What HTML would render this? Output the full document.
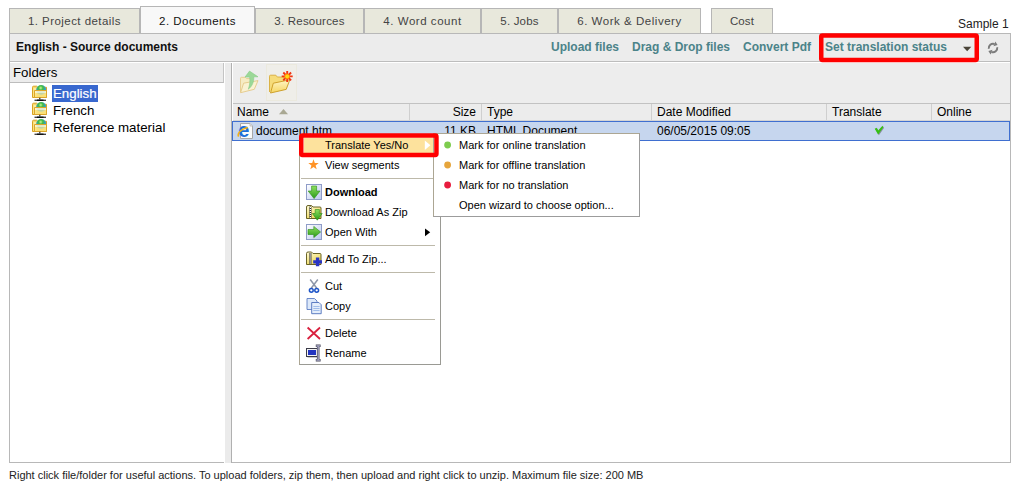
<!DOCTYPE html>
<html><head><meta charset="utf-8">
<style>
*{box-sizing:border-box}
html,body{margin:0;padding:0;width:1020px;height:498px;overflow:hidden;background:#fff;font-family:"Liberation Sans",sans-serif;color:#000}
div{position:absolute}
.tab{top:8px;height:26px;background:#e8e8dc;border:1px solid #b6b6b6;border-bottom:none;font-size:11.5px;color:#444;text-align:center;line-height:24px;white-space:nowrap}
.tab.act{top:6px;height:28px;background:#f8f8f8;color:#111;line-height:28px}
.t{white-space:nowrap}
.f11{font-size:11px;line-height:13px}
.f12{font-size:12px;line-height:14px}
.f13{font-size:13px;line-height:15px}
.lnk{top:41px;font-size:12px;line-height:14px;font-weight:bold;color:#4b8389;white-space:nowrap}
.sep{height:1px;background:#bdb9aa}
.vs{width:1px;top:104px;height:16px;background:#cfcfcf}
.mi{left:325px;font-size:11px;line-height:13px;white-space:nowrap;color:#000}
</style></head><body>

<!-- tabs -->
<div class="tab" style="left:9px;width:131px;letter-spacing:0.45px">1. Project details</div>
<div class="tab act" style="left:140px;width:115px;letter-spacing:0.5px">2. Documents</div>
<div class="tab" style="left:255px;width:109px;letter-spacing:0.22px">3. Resources</div>
<div class="tab" style="left:364px;width:117px;letter-spacing:0.54px">4. Word count</div>
<div class="tab" style="left:481px;width:77px;letter-spacing:0.18px">5. Jobs</div>
<div class="tab" style="left:558px;width:143px;letter-spacing:0.53px">6. Work &amp; Delivery</div>
<div class="tab" style="left:711px;width:62px;letter-spacing:0.13px">Cost</div>
<div class="t f12" style="left:958px;top:17px;color:#222">Sample 1</div>

<!-- outer box -->
<div style="left:9px;top:33px;width:1002px;height:430px;border:1px solid #b8b8b8;background:#fff"></div>
<!-- header bar -->
<div style="left:10px;top:34px;width:1000px;height:28px;background:#ececec;border-bottom:1px solid #bdbdbd"></div>
<div class="t f12" style="left:16px;top:40px;font-weight:bold;color:#111">English - Source documents</div>
<div class="lnk" style="left:551px;top:40px">Upload files</div>
<div class="lnk" style="left:632px;top:40px">Drag &amp; Drop files</div>
<div class="lnk" style="left:743px;top:40px">Convert Pdf</div>
<div class="lnk" style="left:825px;top:40px">Set translation status</div>

<!-- folders panel header -->
<div style="left:10px;top:63px;width:214px;height:20px;background:#ececec;border-bottom:1px solid #bdbdbd;border-right:1px solid #c4c4c4"></div>
<div class="t f13" style="left:13px;top:65px;font-size:13.3px">Folders</div>
<!-- tree -->
<div style="left:52px;top:85px;width:46px;height:17px;background:#3868cf"></div>
<div class="t f13" style="left:53px;top:86px;color:#fff;font-size:13.3px;-webkit-text-stroke:0.2px #fff">English</div>
<div class="t f13" style="left:53px;top:103px;font-size:13.3px">French</div>
<div class="t f13" style="left:53px;top:120px;font-size:13.3px">Reference material</div>

<!-- splitter -->
<div style="left:225px;top:63px;width:6px;height:400px;background:#ebebeb"></div>
<div style="left:231px;top:63px;width:1px;height:400px;background:#b0b0b0"></div>
<div style="left:224px;top:462px;width:1px;height:1px;background:#fff"></div>

<!-- toolbar -->
<div style="left:233px;top:63px;width:777px;height:41px;background:#ededed;border-bottom:1px solid #c2c2c2"></div>
<div style="left:266px;top:64px;width:31px;height:37px;border:1px solid #ebe9de;background:#efeee9"></div>

<!-- grid header -->
<div style="left:233px;top:104px;width:777px;height:17px;background:#ececec;border-bottom:1px solid #d4d4d4"></div>
<div class="vs" style="left:409px"></div>
<div class="vs" style="left:481px"></div>
<div class="vs" style="left:651px"></div>
<div class="vs" style="left:826px"></div>
<div class="vs" style="left:931px"></div>
<div class="t f12" style="left:237px;top:105px">Name</div>
<div class="t f12" style="left:440px;top:105px;width:36px;text-align:right">Size</div>
<div class="t f12" style="left:487px;top:105px">Type</div>
<div class="t f12" style="left:657px;top:105px">Date Modified</div>
<div class="t f12" style="left:832px;top:105px">Translate</div>
<div class="t f12" style="left:937px;top:105px">Online</div>

<!-- selected row -->
<div style="left:232px;top:121px;width:778px;height:20px;background:#c6d6ee;border:1px solid #3f6fd0"></div>
<div class="t f12" style="left:256px;top:124px">document.htm</div>
<div class="t f12" style="left:436px;top:124px;width:40px;text-align:right">11 KB</div>
<div class="t f12" style="left:487px;top:124px">HTML Document</div>
<div class="t f12" style="left:657px;top:124px">06/05/2015 09:05</div>

<!-- context menu -->
<div style="left:299px;top:134px;width:142px;height:231px;background:#fff;border:1px solid #9a9a94;border-left-color:#aca693"></div>
<div style="left:304px;top:138px;width:130px;height:15px;background:#fde29d"></div>
<div class="mi" style="top:139px">Translate Yes/No</div>
<div class="mi" style="top:159px">View segments</div>
<div class="sep" style="left:301px;top:178px;width:134px"></div>
<div class="mi" style="top:186px;font-weight:bold">Download</div>
<div class="mi" style="top:206px">Download As Zip</div>
<div class="mi" style="top:226px">Open With</div>
<div class="sep" style="left:301px;top:245px;width:134px"></div>
<div class="mi" style="top:253px">Add To Zip...</div>
<div class="sep" style="left:301px;top:272px;width:134px"></div>
<div class="mi" style="top:280px">Cut</div>
<div class="mi" style="top:300px">Copy</div>
<div class="sep" style="left:301px;top:319px;width:134px"></div>
<div class="mi" style="top:327px">Delete</div>
<div class="mi" style="top:347px">Rename</div>

<!-- submenu -->
<div style="left:433px;top:133px;width:207px;height:84px;background:#fff;border:1px solid #9c9c9c;border-left-color:#aca693;border-top-color:#aca693"></div>
<div class="mi" style="left:459px;top:139px">Mark for online translation</div>
<div class="mi" style="left:459px;top:159px">Mark for offline translation</div>
<div class="mi" style="left:459px;top:179px">Mark for no translation</div>
<div class="mi" style="left:459px;top:199px">Open wizard to choose option...</div>

<!-- status -->
<div class="t f11" style="left:9px;top:469px;color:#222">Right click file/folder for useful actions. To upload folders, zip them, then upload and right click to unzip. Maximum file size: 200 MB</div>

<!-- icon overlay -->
<svg style="position:absolute;left:0;top:0" width="1020" height="498" viewBox="0 0 1020 498">
<defs>
 <linearGradient id="gbox" x1="0" y1="0" x2="1" y2="1"><stop offset="0" stop-color="#ffffff"/><stop offset="1" stop-color="#b9c8ee"/></linearGradient>
 <radialGradient id="gglobe2" cx="0.45" cy="0.3" r="0.7"><stop offset="0" stop-color="#c8f4a0"/><stop offset="0.3" stop-color="#45bd3c"/><stop offset="0.7" stop-color="#2e9bd4"/><stop offset="1" stop-color="#7cc4f2"/></radialGradient>
 <linearGradient id="gglobe" x1="0" y1="0" x2="0" y2="1"><stop offset="0" stop-color="#44bb33"/><stop offset="0.6" stop-color="#3d9fd8"/><stop offset="1" stop-color="#8cc8f0"/></linearGradient>
 <linearGradient id="gfold" x1="0" y1="0" x2="0" y2="1"><stop offset="0" stop-color="#fff6c8"/><stop offset="1" stop-color="#f6d660"/></linearGradient>
 <linearGradient id="gzip" x1="0" y1="0" x2="0.6" y2="1"><stop offset="0" stop-color="#fffbd8"/><stop offset="1" stop-color="#ecd654"/></linearGradient>
 <linearGradient id="garr" x1="0" y1="0" x2="0" y2="1"><stop offset="0" stop-color="#8ee060"/><stop offset="1" stop-color="#2a9a18"/></linearGradient>
 <g id="tf">
  <path d="M0.5 12.5 V2.3 Q0.5 1.2 1.6 1.2 H4.6 L5.8 2.3 H14.5 V12.5 Z" fill="#f7d86c" stroke="#d9a321"/>
  <path d="M1.5 3 H4.5 V12 H1.5 Z" fill="#fff3b0" opacity="0.7"/>
  <circle cx="9.2" cy="5" r="5" fill="url(#gglobe2)"/>
  <path d="M2.5 5.5 H14.5 V12.5 H2.5 Z" fill="#fbe47e" fill-opacity="0.7" stroke="#dca62a"/>
  <path d="M3 6 H14 V8 H3 Z" fill="#ffffff" fill-opacity="0.55"/>
  <path d="M7.8 12.8 V14.6" stroke="#2a2a2a" stroke-width="1.2"/>
  <path d="M2.5 15.3 H14" stroke="#444" stroke-width="1.4"/>
  <path d="M5 15.3 H11.5" stroke="#111" stroke-width="1.4"/>
 </g>
</defs>
<!-- tree folder icons -->
<use href="#tf" x="32" y="85"/>
<use href="#tf" x="32" y="102"/>
<use href="#tf" x="32" y="119"/>

<!-- refresh -->
<g fill="none" stroke="#7c7c7c" stroke-width="2">
 <path d="M988.8 48.75 A4.3 4.3 0 0 1 994.5 44"/>
 <path d="M997.2 47.25 A4.3 4.3 0 0 1 991.5 52"/>
</g>
<path d="M995.4 41.6 L997.6 45.1 L993.5 46.3 Z" fill="#7c7c7c"/>
<path d="M990.6 54.4 L988.4 50.9 L992.5 49.7 Z" fill="#7c7c7c"/>
<!-- dropdown arrow -->
<path d="M963 46.7 H971.3 L967.15 51.3 Z" fill="#4a4438"/>

<!-- toolbar: up folder faded -->
<path d="M240.5 92.5 V78.3 Q240.5 77.3 241.5 77.3 H245.3 L246.6 78.6 H252 V82" fill="#f6ecc4" stroke="#e6cc8c" stroke-width="0.9"/>
<path d="M240.6 92.7 L243.6 83.2 L258 80.6 L254.3 89.3 Z" fill="#faf2d2" stroke="#e4c888" stroke-width="0.9"/>
<path d="M249.5 71.1 L258 76.8 H253.8 C253.9 81.5 252.6 86 248.3 89.2 C249.8 85 250.3 80.5 249.6 77.1 H245 Z" fill="#9bd898" stroke="#88cc86" stroke-width="0.6"/>
<!-- toolbar: new folder -->
<path d="M269.5 92 V76.2 Q269.5 75.2 270.5 75.2 H275.8 L277.3 77 H284 V82" fill="#f6dc7a" stroke="#d8ac3a" stroke-width="0.9"/>
<path d="M270.5 93 L273.3 83.2 L289.8 79.8 L286.2 89.4 Z" fill="url(#gfold)" stroke="#c99a20" stroke-width="0.9"/>
<g stroke="#f23410" stroke-width="1.9">
 <path d="M287.2 70.9 V81.9 M281.7 76.4 H292.7 M283.3 72.5 L291.1 80.3 M291.1 72.5 L283.3 80.3"/>
</g>
<circle cx="287.2" cy="76.4" r="2.4" fill="#ffd81a" stroke="#ff8c00" stroke-width="0.9"/>

<!-- sort triangle -->
<path d="M279 114.3 H288 L283.5 109 Z" fill="#a9a893"/>

<!-- IE doc icon -->
<path d="M240.5 123.5 H250 L252.5 126 V138.5 H240.5 Z" fill="#fafafa" stroke="#a8a8a8"/>
<path d="M250 123.5 V126 H252.5" fill="#e4e4e4" stroke="#b8b8b8" stroke-width="0.8"/>
<text x="238.2" y="137" font-family="Liberation Sans" font-weight="bold" font-size="20" fill="#1d6fd8">e</text>
<path d="M238.6 136.6 C237 134 240.2 129 247.8 127.4" fill="none" stroke="#f2b11a" stroke-width="1.5"/>
<!-- checkmark -->
<path d="M875.6 129.6 L877.4 128.6 L878.9 131.4 L883.3 126.6 L884 128 L878.9 135.2 Z" fill="#3a3a3a" opacity="0.45"/>
<path d="M874.7 128.7 L876.6 127.7 L878.1 130.6 L882.5 125.8 L883.3 127.3 L878.1 134.4 Z" fill="#35c012"/>
<!-- menu icons -->
<path d="M313.5 159.3 L314.8 163.1 L318.7 163.1 L315.6 165.5 L316.7 169.3 L313.5 167 L310.3 169.3 L311.4 165.5 L308.3 163.1 L312.2 163.1 Z" fill="#ff9326"/>

<rect x="306.5" y="184.5" width="15" height="15" fill="url(#gbox)" stroke="#8f9cc8"/>
<path d="M311.6 186 H316.6 V191 H320 L314.1 198.6 L308.2 191 H311.6 Z" fill="url(#garr)" stroke="#2a8a18" stroke-width="0.6"/>

<path d="M306.5 218.5 V207 Q306.5 205.5 308 205.5 H311.5 L313 207 H320 Q321 207 321 208 V218.5 Z" fill="url(#gzip)" stroke="#5a5414" stroke-width="0.9"/>
<rect x="309.4" y="206.5" width="2" height="11.5" fill="#2a2a2a"/>
<path d="M310.4 207 V218" stroke="#fff" stroke-width="1.2" stroke-dasharray="1 1"/>
<path d="M315.2 209.5 H319.4 V213.5 H322.2 L317.3 220.2 L312.4 213.5 H315.2 Z" fill="url(#garr)" stroke="#2a8a18" stroke-width="0.6"/>
<rect x="306.5" y="224.5" width="15" height="15" fill="url(#gbox)" stroke="#8f9cc8"/>
<path d="M308 229.5 H313.8 V226.4 L320.6 232 L313.8 237.6 V234.5 H308 Z" fill="url(#garr)" stroke="#2a8a18" stroke-width="0.6"/>
<path d="M425 228.4 L430.2 232.3 L425 236.2 Z" fill="#000"/>
<path d="M424.8 140.6 L430.4 145.3 L424.8 150 Z" fill="#fff"/>

<path d="M306.5 264.5 V253.5 Q306.5 252 308 252 H311.5 L313 253.5 H320 Q321 253.5 321 254.5 V264.5 Z" fill="url(#gzip)" stroke="#5a5414" stroke-width="0.9"/>
<rect x="309.4" y="253" width="2" height="11" fill="#2a2a2a"/>
<path d="M310.4 253.5 V264" stroke="#fff" stroke-width="1.2" stroke-dasharray="1 1"/>
<path d="M313.2 260.2 H322 V263.6 H313.2 Z M315.9 257.5 H319.3 V266.3 H315.9 Z" fill="#2a34c4"/>
<path d="M310.2 279.5 L316.8 288.3 M317.8 279.5 L311.2 288.3" stroke="#8c96a8" stroke-width="1.5"/>
<circle cx="311.3" cy="290.3" r="1.9" fill="none" stroke="#1f56c8" stroke-width="1.5"/>
<circle cx="316.7" cy="290.3" r="1.9" fill="none" stroke="#1f56c8" stroke-width="1.5"/>

<path d="M307 298.5 H314.5 L317 301 V309.5 H307 Z" fill="#dde9fa" stroke="#5b7dc4" stroke-width="0.9"/>
<path d="M311.7 302.5 H319 L321.2 304.7 V313.7 H311.7 Z" fill="#e4eefb" stroke="#4f72bc" stroke-width="0.9"/>
<path d="M313.3 306.5 H319.6 M313.3 308.5 H319.6 M313.3 310.5 H319.6" stroke="#8eb0e6" stroke-width="0.8"/>

<path d="M307.6 327.5 L320 339 M320 327.5 L307.6 339" stroke="#d9203e" stroke-width="1.8"/>

<rect x="307.5" y="349.5" width="11" height="8" fill="#9a9aa0"/>
<rect x="306.5" y="348.5" width="11" height="8" fill="#f4f4f4" stroke="#3a3a48"/>
<rect x="308" y="350" width="8" height="5" fill="#2234c0"/>
<path d="M318.2 346.2 V359.8 M315.8 345.8 H320.6 M315.8 360.2 H320.6" stroke="#4a4a5a" stroke-width="2.6"/>
<path d="M318.2 346.2 V359.8 M316.3 345.8 H320.1 M316.3 360.2 H320.1" stroke="#a8a8c8" stroke-width="1.2"/>

<!-- submenu dots -->
<circle cx="447.6" cy="145" r="3.4" fill="#7dcc4e"/>
<circle cx="447.6" cy="165" r="3.4" fill="#e6a53c"/>
<circle cx="447.6" cy="185" r="3.4" fill="#e81c3e"/>

<!-- red annotation boxes -->
<rect x="821.25" y="35.55" width="155.5" height="24.4" rx="1.2" fill="none" stroke="#ff0000" stroke-width="4.5"/>
<rect x="301.25" y="135.55" width="135.2" height="19.4" rx="1.2" fill="none" stroke="#ff0000" stroke-width="4.5"/>
</svg>

</body></html>
